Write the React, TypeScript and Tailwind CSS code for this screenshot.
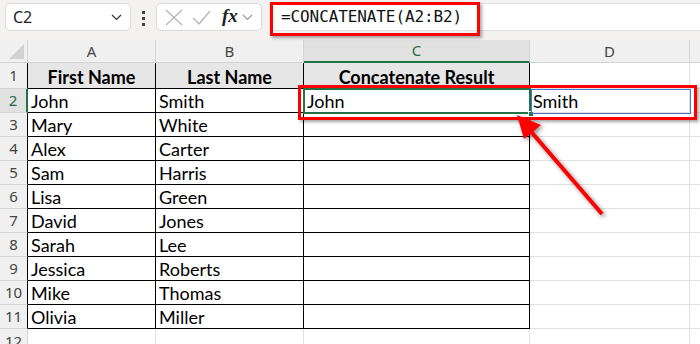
import React from "react";

const cellFont = "font-['Lato','Liberation_Sans',sans-serif]";
const uiFont = "font-['Noto_Sans','Open_Sans',sans-serif]";

// col widths incl. right border: A, B, C, D, E
const cols = [
  { key: "A", w: "w-[128px]" },
  { key: "B", w: "w-[148px]" },
  { key: "C", w: "w-[226px]" },
  { key: "D", w: "w-[160px]" },
  { key: "", w: "w-[60px]" },
];

const data: string[][] = [
  ["First Name", "Last Name", "Concatenate Result"],
  ["John", "Smith", "John", "Smith"],
  ["Mary", "White"],
  ["Alex", "Carter"],
  ["Sam", "Harris"],
  ["Lisa", "Green"],
  ["David", "Jones"],
  ["Sarah", "Lee"],
  ["Jessica", "Roberts"],
  ["Mike", "Thomas"],
  ["Olivia", "Miller"],
  [],
];

function Chevron({ color = "#333" }: { color?: string }) {
  return (
    <svg width="11" height="7" viewBox="0 0 11 7" fill="none" stroke={color} strokeWidth="1.2">
      <polyline points="1,1 5.5,5.5 10,1" />
    </svg>
  );
}

function Toolbar() {
  return (
    <div className="h-[40px] bg-[#f3f2f1] flex items-start pt-[3px]">
      <div className="ml-[5px] w-[126px] h-[28px] bg-white border border-[#dadada] rounded-[5px] flex items-center justify-between pl-[7px] pr-[8px]">
        <span className={`${uiFont} text-[16px] text-[#222]`}>C2</span>
        <Chevron />
      </div>
      <div className="ml-[11px] mt-[8px] flex flex-col gap-[3px]">
        <span className="block w-[3px] h-[3px] bg-[#444]" />
        <span className="block w-[3px] h-[3px] bg-[#444]" />
        <span className="block w-[3px] h-[3px] bg-[#444]" />
      </div>
      <div className="ml-[11px] w-[106px] h-[28px] bg-white border border-[#dadada] rounded-[5px] flex items-center pl-[8px]">
        <svg width="18" height="17" viewBox="0 0 18 17" fill="none" stroke="#b5b5b5" strokeWidth="1.3">
          <line x1="1" y1="1" x2="17" y2="16" />
          <line x1="17" y1="1" x2="1" y2="16" />
        </svg>
        <svg className="ml-[9px]" width="19" height="15" viewBox="0 0 19 15" fill="none" stroke="#b5b5b5" strokeWidth="1.3">
          <polyline points="1,8 7,14 18,1" />
        </svg>
        <span className="ml-[11px] font-['Liberation_Serif',serif] italic font-bold text-[19px] leading-none text-[#222] -mt-[3px]">
          fx
        </span>
        <span className="ml-[4px]">
          <Chevron color="#999" />
        </span>
      </div>
      <div className="ml-[7px] flex-1 h-[28px] bg-white border-y border-l border-[#e2e2e2] flex items-center pl-[11px]">
        <span className="font-['DejaVu_Sans_Mono','Liberation_Mono',monospace] text-[16px] text-[#111] tracking-[-0.1px]">
          =CONCATENATE(A2:B2)
        </span>
      </div>
    </div>
  );
}

function HeaderRow() {
  return (
    <div className="flex h-[23px]">
      <div className="w-[28px] shrink-0 bg-[#f0f0f0] border-r border-b border-[#d4d4d4] flex items-end justify-end pr-[3px] pb-[3px]">
        <svg width="15" height="15" viewBox="0 0 15 15">
          <polygon points="15,0 15,15 0,15" fill="#d2d2d2" />
        </svg>
      </div>
      {cols.map((c, i) => {
        const sel = c.key === "C";
        return (
          <div
            key={i}
            className={`${c.w} shrink-0 border-r flex items-center justify-center ${uiFont} text-[15px] ${
              sel
                ? "bg-[#e1e1e1] text-[#1e6b3c] border-b-2 border-b-[#217346] border-r-[#d4d4d4]"
                : "bg-[#f0f0f0] text-[#444] border-b border-[#d4d4d4]"
            }`}
          >
            {c.key}
          </div>
        );
      })}
    </div>
  );
}

function Row({ idx, cells }: { idx: number; cells: string[] }) {
  const n = idx + 1;
  const inTable = n <= 11;
  const isHeader = n === 1;
  const selRow = n === 2;
  const h = isHeader ? "h-[26px]" : n === 12 ? "h-[20px]" : "h-[24px]";
  return (
    <div className={`flex ${h}`}>
      <div
        className={`w-[28px] shrink-0 border-b border-[#d4d4d4] flex items-center justify-center ${uiFont} text-[15px] ${
          n === 12 ? "items-start pt-[1px]" : ""
        } ${
          selRow
            ? "bg-[#e1e1e1] text-[#1e6b3c] border-r-2 border-r-[#217346]"
            : inTable
            ? "bg-[#f0f0f0] text-[#444] border-r border-r-black"
            : "bg-[#f0f0f0] text-[#444] border-r border-r-[#d4d4d4]"
        }`}
      >
        {n}
      </div>
      {cols.map((c, ci) => {
        const tableCell = inTable && ci < 3;
        const border = tableCell ? "border-r border-b border-black" : "border-r border-b border-[#e1e1e1]";
        const bg = isHeader && ci < 3 ? "bg-[#e7e6e6]" : "bg-white";
        const text = cells[ci] ?? "";
        return (
          <div
            key={ci}
            className={`${c.w} shrink-0 ${border} ${bg} flex items-center ${cellFont} text-[18px] leading-none text-black whitespace-nowrap ${
              isHeader ? "justify-center font-bold pt-[2px]" : "pl-[3px] pt-[1px]"
            }`}
          >
            {text}
          </div>
        );
      })}
    </div>
  );
}

export default function App() {
  return (
    <div className="w-[700px] h-[344px] overflow-hidden bg-white relative">
      <Toolbar />
      <HeaderRow />
      {data.map((cells, i) => (
        <Row key={i} idx={i} cells={cells} />
      ))}

      {/* selection on C2 */}
      <div className="absolute left-[303px] top-[88px] w-[228px] h-[26px] border-2 border-[#217346] pointer-events-none" />
      <div className="absolute left-[528px] top-[111px] w-[6px] h-[6px] bg-[#217346] border border-white" />
      {/* D2 outline */}
      <div className="absolute left-[531px] top-[89px] w-[160px] h-[25px] border border-[#4a74c9]" />

      {/* red highlight boxes */}
      <div className="absolute left-[270px] top-[2px] w-[210px] h-[34px] border-[3px] border-[#ff0000] shadow-[2px_2px_3px_rgba(0,0,0,0.35)]" />
      <div className="absolute left-[298px] top-[85px] w-[399px] h-[35px] border-[3px] border-[#ff0000] shadow-[2px_2px_3px_rgba(0,0,0,0.35)]" />

      {/* arrow */}
      <svg
        className="absolute left-0 top-0 drop-shadow-[2px_2px_2px_rgba(0,0,0,0.45)]"
        width="700"
        height="344"
        viewBox="0 0 700 344"
      >
        <line x1="602" y1="214" x2="527" y2="127" stroke="#ff0000" strokeWidth="4" />
        <polygon points="517,115 524,139 541,125" fill="#ff0000" />
      </svg>
    </div>
  );
}
